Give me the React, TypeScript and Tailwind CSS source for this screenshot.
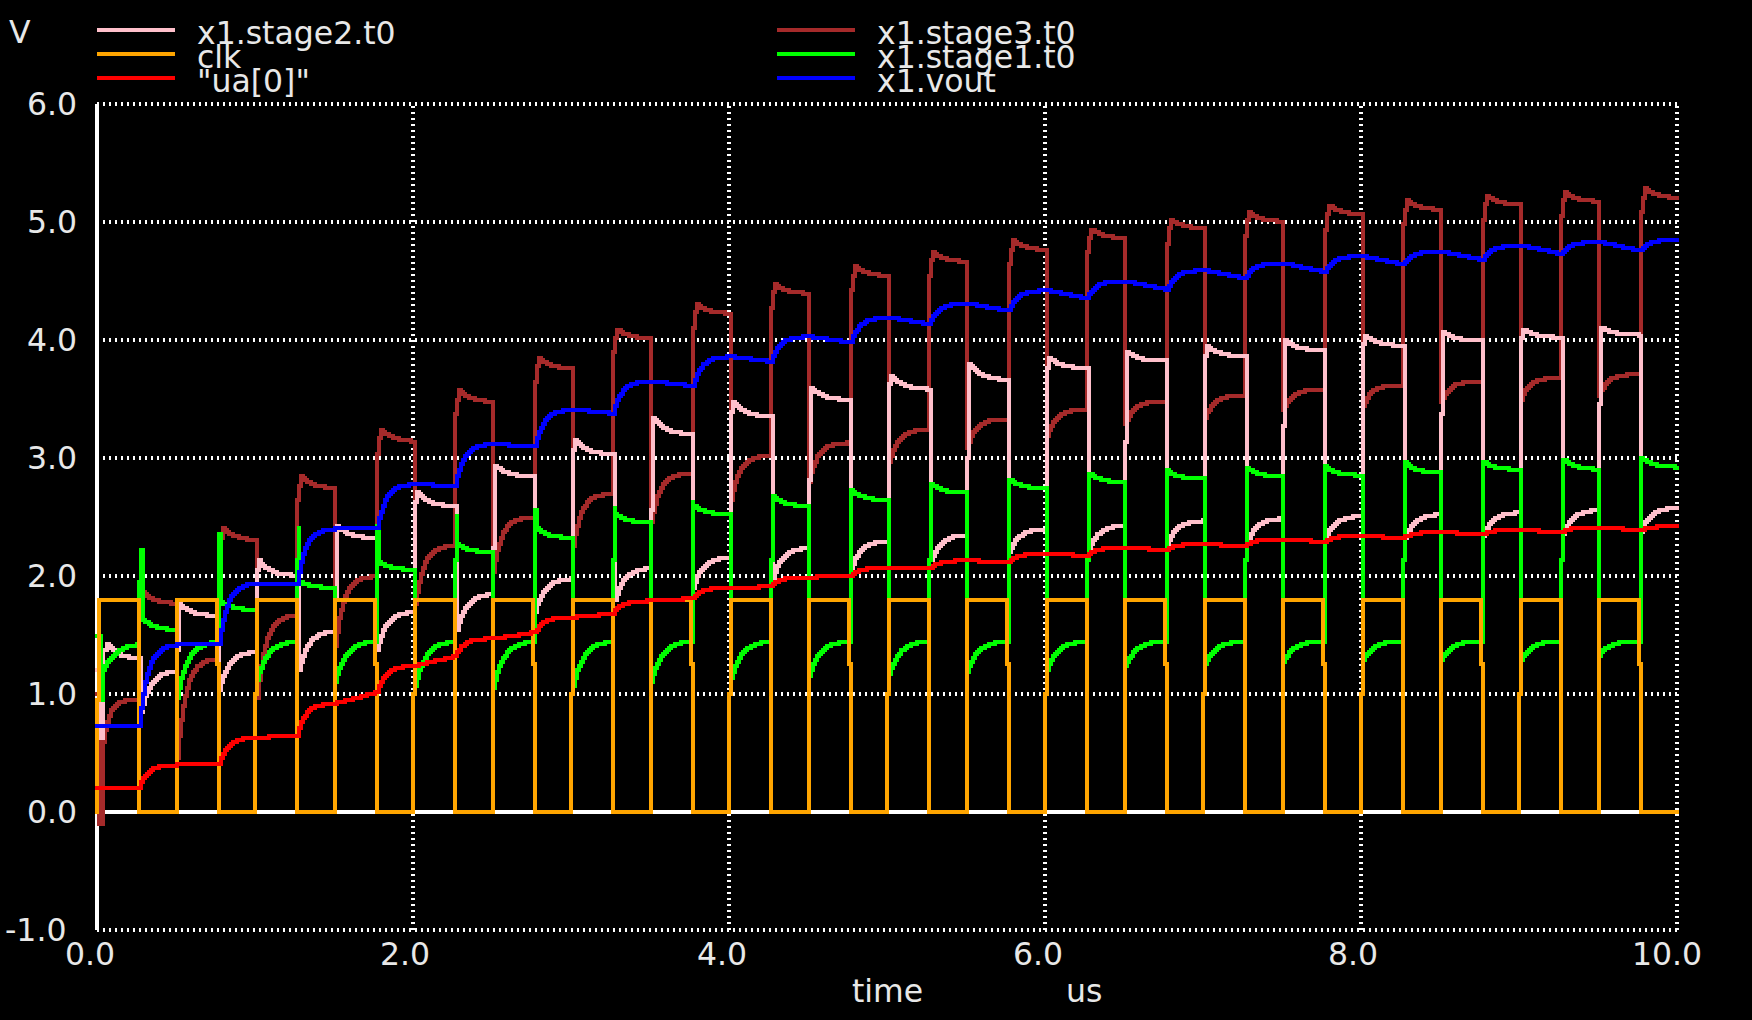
const X0 = 97;
const PX_PER_US = 158;
const Y0 = 812;
const PX_PER_V = 118;

type Pt = [number, number];

// settle values read off the plot, one entry per clock cycle
const bluePlateau = [1.42, 1.94, 2.4, 2.78, 3.12, 3.41, 3.65, 3.86, 4.03, 4.19, 4.31, 4.42, 4.5, 4.59, 4.65, 4.71, 4.75, 4.8, 4.83, 4.85];
const redPlateau = [0.4, 0.63, 0.92, 1.24, 1.47, 1.65, 1.79, 1.9, 1.99, 2.07, 2.13, 2.19, 2.24, 2.27, 2.31, 2.34, 2.37, 2.39, 2.41, 2.42];
const redEnd = [0.41, 0.65, 1.01, 1.32, 1.52, 1.68, 1.81, 1.91, 2.0, 2.06, 2.12, 2.17, 2.22, 2.25, 2.29, 2.32, 2.355, 2.37, 2.39, 2.42];
const pinkPeak = [1.42, 1.77, 2.13, 2.43, 2.71, 2.94, 3.15, 3.34, 3.47, 3.6, 3.7, 3.8, 3.85, 3.9, 3.95, 4.0, 4.04, 4.07, 4.09, 4.11];
const pinkEnd = [1.29, 1.66, 2.0, 2.32, 2.59, 2.84, 3.03, 3.2, 3.35, 3.49, 3.58, 3.66, 3.76, 3.82, 3.86, 3.91, 3.95, 3.99, 4.02, 4.04];
const pinkLow = [1.2, 1.36, 1.54, 1.7, 1.85, 1.98, 2.07, 2.16, 2.24, 2.3, 2.35, 2.4, 2.43, 2.47, 2.49, 2.51, 2.525, 2.54, 2.56, 2.58];
const pinkDelta = [0.35, 0.33, 0.34, 0.32, 0.3, 0.28, 0.27, 0.26, 0.25, 0.24, 0.22, 0.2, 0.2, 0.2, 0.2, 0.2, 0.2, 0.2, 0.2, 0.2];
const brownPeak = [1.86, 2.4, 2.84, 3.235, 3.57, 3.85, 4.09, 4.3, 4.47, 4.62, 4.74, 4.84, 4.94, 5.02, 5.08, 5.14, 5.18, 5.22, 5.25, 5.28];
const brownHigh = [0.95, 1.3, 1.67, 2.0, 2.26, 2.5, 2.7, 2.87, 3.02, 3.13, 3.24, 3.33, 3.41, 3.48, 3.53, 3.58, 3.62, 3.65, 3.68, 3.71];
const brownDelta = [0, 0.85, 0.7, 0.6, 0.5, 0.47, 0.45, 0.42, 0.38, 0.33, 0.28, 0.25, 0.22, 0.2, 0.19, 0.18, 0.18, 0.18, 0.18, 0.18];
const greenPeak = [1.63, 1.78, 1.95, 2.12, 2.27, 2.4, 2.53, 2.6, 2.67, 2.73, 2.78, 2.82, 2.87, 2.89, 2.92, 2.93, 2.96, 2.97, 2.99, 3.0];
const greenEnd = [1.54, 1.71, 1.9, 2.05, 2.2, 2.32, 2.45, 2.52, 2.59, 2.64, 2.7, 2.74, 2.79, 2.82, 2.84, 2.85, 2.87, 2.9, 2.9, 2.92];
const greenDelta = [0, 0.48, 0.33, 0.35, 0.38, 0.4, 0.38, 0.35, 0.32, 0.3, 0.28, 0.26, 0.24, 0.22, 0.2, 0.18, 0.16, 0.16, 0.16, 0.12];
const greenSpike = [2.22, 2.35, 2.42, 2.43, 2.53, 2.56, 2.59, 2.64];

const CYCLES = 20;
const riseTop = (k: number) => (k % 2 === 0 ? 99 + 79 * k : 98 + 79 * k);
const riseBottom = (k: number) => (k % 2 === 0 ? 97 + 79 * k : 98 + 79 * k);
const fallTop = (k: number) => (k % 2 === 0 ? 139 + 79 * k : 139 + 79 * k - 1);
const fallBottom = (k: number) => (k % 2 === 0 ? 139 + 79 * k : 139 + 79 * k + 1);
const nextRise = (k: number) => (k === CYCLES - 1 ? 1677 : riseTop(k + 1));

const vy = (v: number) => Y0 - v * PX_PER_V;

// the plot is pixel doubled, so snap to odd x / even y and draw stairs
const stairs = (pts: Pt[]) => {
  let d = '';
  pts.forEach(([x, v], i) => {
    const qx = Math.round((x - 1) / 2) * 2 + 1;
    const qy = Math.round(vy(v) / 2) * 2;
    d += i === 0 ? `M${qx} ${qy}` : `H${qx}V${qy}`;
  });
  return d;
};

const sample = (x0: number, x1: number, f: (u: number) => number) => {
  const pts: Pt[] = [];
  for (let x = x0; x < x1; x += 2) pts.push([x, f(x - x0)]);
  pts.push([x1, f(x1 - x0)]);
  return pts;
};

const bluePoints = () => {
  const pts: Pt[] = [[97, 0.73], [139, 0.73]];
  let from = 0.73;
  for (let k = 0; k < CYCLES; k++) {
    const target = bluePlateau[k];
    const start = from;
    pts.push(...sample(fallBottom(k), nextRise(k), (u) => target - (target - start) * Math.exp(-u / 8)));
    if (k === CYCLES - 1) break;
    const droop = k < 3 ? 0 : Math.min(0.07, 0.02 + (k - 3) * 0.006);
    pts.push(...sample(riseTop(k + 1), fallBottom(k + 1), (u) => target - (droop * u) / 40));
    from = target - droop;
  }
  return pts;
};

const redPoints = () => {
  const pts: Pt[] = [[97, 0.205], [139, 0.205]];
  let from = 0.205;
  for (let k = 0; k < CYCLES; k++) {
    const target = redPlateau[k];
    const end = redEnd[k];
    const start = from;
    pts.push(...sample(fallBottom(k), nextRise(k), (u) => target - (target - start) * Math.exp(-u / 8)));
    if (k === CYCLES - 1) break;
    pts.push(...sample(riseTop(k + 1), fallBottom(k + 1), (u) => target + ((end - target) * u) / 40));
    from = end;
  }
  return pts;
};

const pinkPoints = () => {
  const pts: Pt[] = [[97, 1.2], [101, 1.2], [101, 0.63], [103, 0.63], [103, 1.38], [107, 1.42]];
  pts.push(...sample(107, fallBottom(0), (u) => pinkEnd[0] + 0.13 * Math.exp(-u / 12)));
  for (let k = 0; k < CYCLES; k++) {
    const x0 = k % 2 === 0 ? fallBottom(k) + 2 : fallBottom(k);
    pts.push(...sample(x0, nextRise(k), (u) => pinkLow[k] - pinkDelta[k] * Math.exp(-u / 9)));
    if (k === CYCLES - 1) break;
    const n = k + 1;
    const peak = pinkPeak[n];
    const end = pinkEnd[n];
    const rt = riseTop(n);
    // the rising edge jogs 2px: low down on odd cycles, near the top on even ones
    const mid = n % 2 === 1 ? pinkLow[k] + (0.28 + (n * 0.3) / 19) * (peak - pinkLow[k]) : peak - 0.08;
    pts.push([rt, mid], [rt + 2, mid]);
    pts.push(...sample(rt + 2, fallBottom(n), (u) => end + (peak - end) * Math.exp(-u / 11)));
  }
  return pts;
};

const brownPoints = () => {
  const pts: Pt[] = [[97, 1.0], [99, 1.0], [99, -0.1], [103, -0.09], [103, 0.6]];
  pts.push(...sample(103, fallBottom(0), (u) => brownHigh[0] - 0.35 * Math.exp(-u / 6)));
  for (let k = 0; k < CYCLES; k++) {
    const peak = brownPeak[k];
    const end = peak - (k < 6 ? 0.1 : 0.08);
    const fb = fallBottom(k);
    pts.push([fb, peak - 0.2], [fb + 2, peak - 0.2], [fb + 2, peak - 0.07], [fb + 4, peak - 0.07]);
    pts.push(...sample(fb + 4, nextRise(k), (u) => end + (peak - end) * Math.exp(-u / 12)));
    if (k === CYCLES - 1) break;
    const high = brownHigh[k + 1];
    const delta = brownDelta[k + 1];
    pts.push(...sample(riseTop(k + 1), fallBottom(k + 1), (u) => high - delta * Math.exp(-u / 8)));
  }
  return pts;
};

const greenPoints = () => {
  const pts: Pt[] = [[97, 1.5], [99, 1.5], [101, 0.95], [103, 1.2]];
  pts.push(...sample(103, fallBottom(0), (u) => 1.43 - 0.23 * Math.exp(-u / 12)));
  for (let k = 0; k < CYCLES; k++) {
    const peak = greenPeak[k];
    const end = greenEnd[k];
    const fall = fallBottom(k);
    const even = k % 2 === 0;
    let x0 = fall;
    if (even) {
      const mid = k === 0 ? 1.95 : 2.14;
      pts.push([fall, mid], [fall + 2, mid]);
      x0 = fall + 2;
    }
    if (k < greenSpike.length) {
      // early falling edges overshoot into a short spike
      const left = even ? fall + 2 : fall;
      const right = k === 0 ? fall + 4 : even ? fall + 2 : k < 6 ? fall + 2 : fall;
      pts.push([left, greenSpike[k]], [right, greenSpike[k]]);
      x0 = right;
    }
    pts.push(...sample(x0, nextRise(k), (u) => end + (peak - end) * Math.exp(-u / 11)));
    if (k === CYCLES - 1) break;
    const delta = greenDelta[k + 1];
    pts.push(...sample(riseTop(k + 1), fallBottom(k + 1), (u) => 1.45 - delta * Math.exp(-u / 10)));
  }
  return pts;
};

const clockPath = () => {
  const low = Y0;
  const high = 600;
  let d = `M97 ${low}V700H99V${high}`;
  for (let k = 0; k < CYCLES; k++) {
    const ft = fallTop(k);
    const fb = fallBottom(k);
    if (k > 0) {
      const rb = riseBottom(k);
      const rt = riseTop(k);
      d += `H${rb}`;
      d += rb === rt ? `V${high}` : `V694H${rt}V${high}`;
    }
    d += `H${ft}`;
    d += ft === fb ? `V${low}` : `V664H${fb}V${low}`;
  }
  return d + 'H1677';
};

const traces = [
  { color: '#a52a2a', d: stairs(brownPoints()) },
  { color: '#ffc0cb', d: stairs(pinkPoints()) },
  { color: '#00ff00', d: stairs(greenPoints()) },
  { color: '#ffa500', d: clockPath() },
  { color: '#ff0000', d: stairs(redPoints()) },
  { color: '#0000ff', d: stairs(bluePoints()) },
];

const legend = [
  { label: 'x1.stage2.t0', color: '#ffc0cb', x1: 97, x2: 175, tx: 197, ly: 30, ty: 44 },
  { label: 'clk', color: '#ffa500', x1: 97, x2: 175, tx: 197, ly: 54, ty: 68 },
  { label: '"ua[0]"', color: '#ff0000', x1: 97, x2: 175, tx: 197, ly: 78, ty: 92 },
  { label: 'x1.stage3.t0', color: '#a52a2a', x1: 777, x2: 855, tx: 877, ly: 30, ty: 44 },
  { label: 'x1.stage1.t0', color: '#00ff00', x1: 777, x2: 855, tx: 877, ly: 54, ty: 68 },
  { label: 'x1.vout', color: '#0000ff', x1: 777, x2: 855, tx: 877, ly: 78, ty: 92 },
];

const yTicks = [
  { label: '6.0', v: 6, x: 27 },
  { label: '5.0', v: 5, x: 27 },
  { label: '4.0', v: 4, x: 27 },
  { label: '3.0', v: 3, x: 27 },
  { label: '2.0', v: 2, x: 27 },
  { label: '1.0', v: 1, x: 27 },
  { label: '0.0', v: 0, x: 27 },
  { label: '-1.0', v: -1, x: 5 },
];

const xTicks = [
  { label: '0.0', x: 65 },
  { label: '2.0', x: 380 },
  { label: '4.0', x: 697 },
  { label: '6.0', x: 1013 },
  { label: '8.0', x: 1328 },
  { label: '10.0', x: 1632 },
];

export default function App() {
  return (
    <div className="h-screen w-full overflow-hidden bg-black">
      <svg width="1752" height="1020" className="block" shapeRendering="crispEdges">
        {/* grid */}
        <g stroke="#ffffff" strokeWidth="4" strokeDasharray="2 4" fill="none">
          {[6, 5, 4, 3, 2, 1, -1].map((v) => (
            <path key={v} d={`M97 ${vy(v)}H1679`} />
          ))}
          {[2, 4, 6, 8, 10].map((t) => (
            <path key={t} d={`M${X0 + t * PX_PER_US} 106V932`} />
          ))}
        </g>
        <g stroke="#ffffff" strokeWidth="4">
          <line x1="97" y1="104" x2="97" y2="930" />
          <line x1="97" y1="812" x2="1677" y2="812" />
        </g>

        {/* traces */}
        <g fill="none" strokeWidth="4" strokeLinejoin="miter" strokeLinecap="square">
          {traces.map((t) => (
            <path key={t.color} d={t.d} stroke={t.color} />
          ))}
        </g>

        {/* legend */}
        <g strokeWidth="4">
          {legend.map((l) => (
            <line key={l.label} x1={l.x1} x2={l.x2} y1={l.ly} y2={l.ly} stroke={l.color} />
          ))}
        </g>
        <g className="fill-[#e8e8e8] text-[31.5px] font-['DejaVu_Sans',sans-serif]" shapeRendering="auto">
          <text x="9" y="43">V</text>
          {legend.map((l) => (
            <text key={l.label} x={l.tx} y={l.ty}>{l.label}</text>
          ))}
          {yTicks.map((t) => (
            <text key={t.label} x={t.x} y={vy(t.v) + 11}>{t.label}</text>
          ))}
          {xTicks.map((t) => (
            <text key={t.label} x={t.x} y="965">{t.label}</text>
          ))}
          <text x="852" y="1002">time</text>
          <text x="1066" y="1002">us</text>
        </g>
      </svg>
    </div>
  );
}
